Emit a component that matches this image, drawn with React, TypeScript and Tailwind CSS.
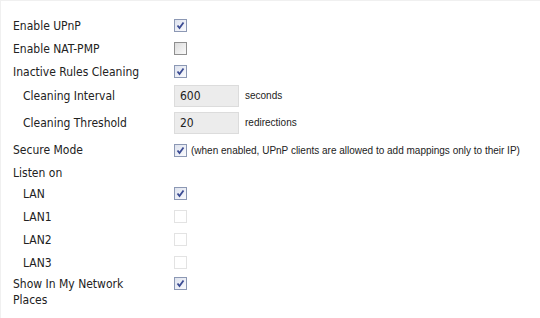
import { ReactNode } from 'react';

type BoxState = 'checked' | 'unchecked' | 'disabled';

const CheckBox = ({ state }: { state: BoxState }) => {
  if (state === 'disabled') {
    return <div className="h-[13px] w-[13px] border border-[#e3e3e3] bg-white" />;
  }
  return (
    <div
      className={
        state === 'checked'
          ? 'relative h-[13px] w-[13px] border border-[#8c98b4] bg-gradient-to-br from-[#dde2ee] to-[#fbfbfd]'
          : 'relative h-[13px] w-[13px] border border-[#8f8f8f] bg-gradient-to-br from-[#dcdcdc] to-[#fafafa]'
      }
    >
      {state === 'checked' && (
        <svg viewBox="0 0 11 11" className="absolute left-0 top-0 h-[11px] w-[11px]">
          <path d="M2.5 5.5 L4.5 8 L8.5 2.5" fill="none" stroke="#3b4b93" strokeWidth="1.8" />
        </svg>
      )}
    </div>
  );
};

const Row = ({
  label,
  indent,
  height,
  children,
}: {
  label: ReactNode;
  indent?: boolean;
  height: string;
  children?: ReactNode;
}) => (
  <div className={`flex items-center ${height}`}>
    <div className={`w-[161px] shrink-0 ${indent ? 'pl-[10px]' : ''}`}>{label}</div>
    <div className="flex items-center">{children}</div>
  </div>
);

const NumberField = ({ value, unit }: { value: string; unit: string }) => (
  <>
    <div className="flex h-[22px] w-[65px] items-center border border-[#dcdcdc] bg-[#ececec] pl-[5px] text-[12px]">
      {value}
    </div>
    <span className="ml-[6px] font-['Liberation_Sans',sans-serif] text-[10px]">{unit}</span>
  </>
);

export default function App() {
  return (
    <div className="h-[318px] w-[540px] overflow-hidden bg-white">
      <div className="h-full border-l border-t border-[#f0f0f0] pl-[12px] pt-[13px] font-['DejaVu_Sans_Condensed','Liberation_Sans',sans-serif] text-[12px] text-[#222]">
        <Row label="Enable UPnP" height="h-[23px]">
          <CheckBox state="checked" />
        </Row>
        <Row label="Enable NAT-PMP" height="h-[23px]">
          <CheckBox state="unchecked" />
        </Row>
        <Row label="Inactive Rules Cleaning" height="h-[23px]">
          <CheckBox state="checked" />
        </Row>
        <Row label="Cleaning Interval" indent height="h-[25px]">
          <NumberField value="600" unit="seconds" />
        </Row>
        <Row label="Cleaning Threshold" indent height="h-[29px]">
          <NumberField value="20" unit="redirections" />
        </Row>
        <Row label="Secure Mode" height="h-[26px]">
          <CheckBox state="checked" />
          <span className="ml-[4px] whitespace-nowrap font-['Liberation_Sans',sans-serif] text-[10px]">
            (when enabled, UPnP clients are allowed to add mappings only to their IP)
          </span>
        </Row>
        <Row label="Listen on" height="h-[19px]" />
        <Row label="LAN" indent height="h-[23px]">
          <CheckBox state="checked" />
        </Row>
        <Row label="LAN1" indent height="h-[23px]">
          <CheckBox state="disabled" />
        </Row>
        <Row label="LAN2" indent height="h-[23px]">
          <CheckBox state="disabled" />
        </Row>
        <Row label="LAN3" indent height="h-[23px]">
          <CheckBox state="disabled" />
        </Row>
        <div className="flex pt-[2px]">
          <div className="w-[161px] shrink-0 leading-[16px]">
            Show In My Network
            <br />
            Places
          </div>
          <div className="pt-[1px]">
            <CheckBox state="checked" />
          </div>
        </div>
      </div>
    </div>
  );
}
